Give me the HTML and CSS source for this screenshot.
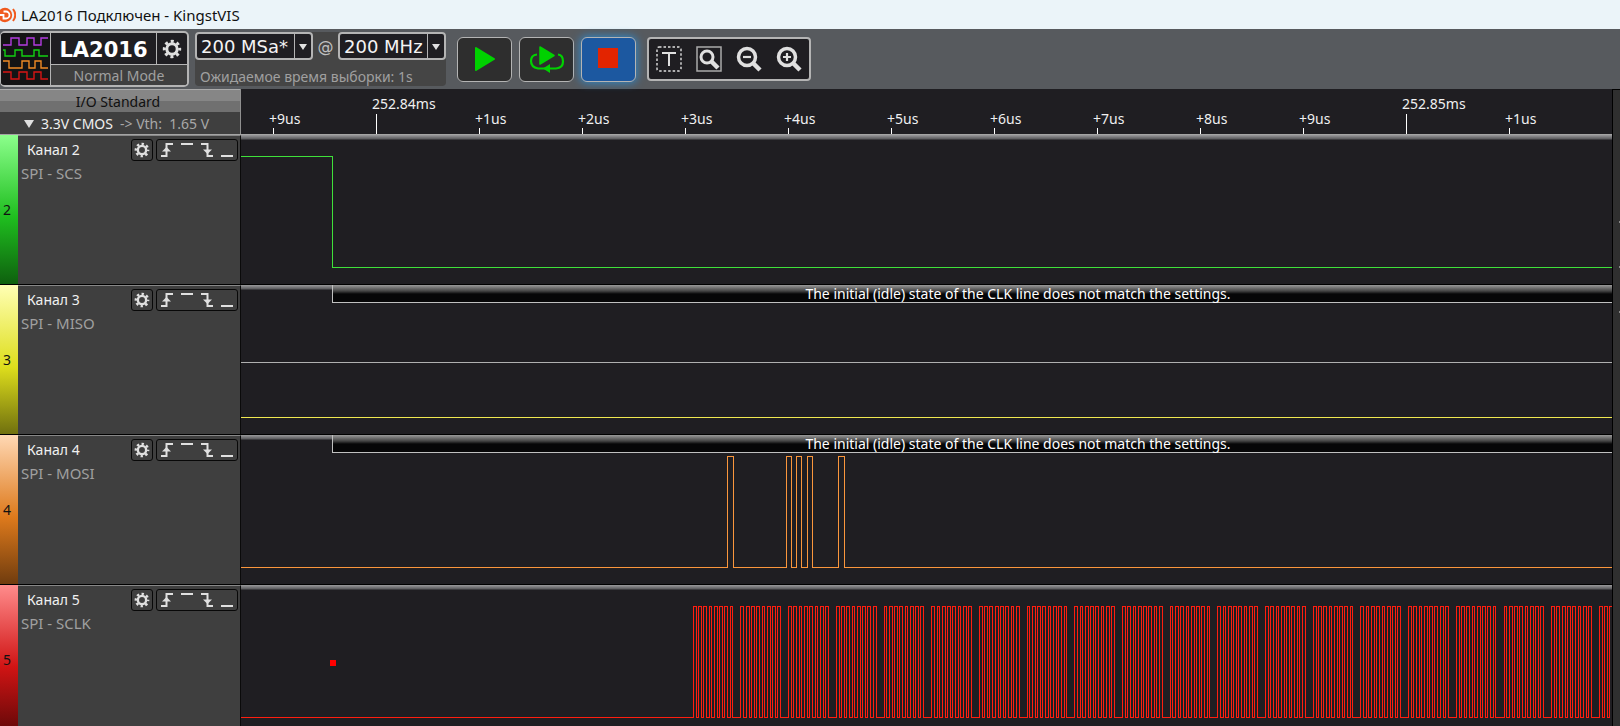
FILE: index.html
```html
<!DOCTYPE html>
<html lang="ru">
<head>
    <meta charset="UTF-8">
    <meta name="viewport" content="width=device-width, initial-scale=1.0">
    <title>LA2016 Подключен - KingstVIS</title>
    <link rel="stylesheet" href="styles.css">
</head>
<body>
    <svg class="sprite">
        <symbol id="gear" viewBox="0 0 20 20">
            <circle cx="10" cy="10" r="5.2" fill="none" stroke="currentColor" stroke-width="3"/>
            <circle cx="10" cy="10" r="7.7" fill="none" stroke="currentColor" stroke-width="3" stroke-dasharray="3 3.048" stroke-dashoffset="1.5"/>
        </symbol>
        <symbol id="rise" viewBox="0 0 14 16">
            <path d="M1 14H6.500V2H13" fill="none" stroke="currentColor" stroke-width="2"/>
            <path d="M2 9.500L6.500 5L11 9.500Z" fill="currentColor"/>
        </symbol>
        <symbol id="high" viewBox="0 0 14 16">
            <path d="M1 2H13" stroke="currentColor" stroke-width="2"/>
        </symbol>
        <symbol id="fall" viewBox="0 0 14 16">
            <path d="M1 2H7.500V14H13" fill="none" stroke="currentColor" stroke-width="2"/>
            <path d="M3 7.500L7.500 12L12 7.500Z" fill="currentColor"/>
        </symbol>
        <symbol id="low" viewBox="0 0 14 16">
            <path d="M1 14H13" stroke="currentColor" stroke-width="2"/>
        </symbol>
    </svg>

    <header class="titlebar">
        <svg class="app-icon" width="16" height="16" viewBox="0 0 16 16">
            <circle cx="5" cy="8" r="7.200" fill="#f05a1e"/>
            <path d="M13 2Q17.500 8 13 14" fill="none" stroke="#f05a1e" stroke-width="2"/>
            <path d="M3.500 4.500H6A3.500 3.500 0 0 1 6 11.500H3.500V7M0 8H3.500" fill="none" stroke="#fff" stroke-width="1.800"/>
        </svg>
        <span>LA2016 Подключен - KingstVIS</span>
    </header>

    <div class="toolbar">
        <div class="device">
            <svg class="device-logo" width="49" height="52" viewBox="0 0 49 52">
                <g fill="none" stroke-width="1.400">
                    <path d="M2 12H10V5H18V12H26V5H33V12H40V5H47" stroke="#b33ce0"/>
                    <path d="M2 17H4V23H14V17H21V23H33V17H38V23H47" stroke="#12d112"/>
                    <path d="M2 28H8V35H21V28H28V35H34V28H40V35H47" stroke="#f08a24"/>
                    <path d="M2 39H10V46H18V39H26V46H33V39H40V46H47" stroke="#d81414"/>
                </g>
            </svg>
            <div class="device-info">
                <div class="device-top">
                    <strong>LA2016</strong>
                    <button class="device-gear" aria-label="Settings"><svg width="20" height="20"><use href="#gear"/></svg></button>
                </div>
                <div class="device-mode">Normal Mode</div>
            </div>
        </div>

        <div class="sampling">
            <div class="sampling-row">
                <span class="combo combo-depth"><select aria-label="Sample depth"><option>200 MSa*</option></select></span>
                <span class="at">@</span>
                <span class="combo combo-rate"><select aria-label="Sample rate"><option>200 MHz</option></select></span>
            </div>
            <div class="sampling-time">Ожидаемое время выборки: 1s</div>
        </div>

        <div class="run">
            <button aria-label="Start">
                <svg width="36" height="32" viewBox="0 0 36 32"><path d="M9 5L27 16L9 27Z" fill="#00d200" stroke="#00d200" stroke-width="2" stroke-linejoin="round"/></svg>
            </button>
            <button aria-label="Repeat">
                <svg width="36" height="32" viewBox="0 0 36 32">
                    <path d="M8 11.500Q2 12 2 18T9 25.500H27Q34 25 34 18.500T29 11.500" fill="none" stroke="#00d200" stroke-width="2.200"/>
                    <path d="M11 4L25 12.500L11 21Z" fill="#00d200" stroke="#00d200" stroke-width="1.500" stroke-linejoin="round"/>
                    <path d="M14 25.500L21 21V30Z" fill="#00d200"/>
                </svg>
            </button>
            <button class="active" aria-label="Stop">
                <svg width="36" height="32" viewBox="0 0 36 32"><rect x="7" y="5" width="20" height="20" fill="#e32400"/></svg>
            </button>
        </div>

        <div class="tools">
            <button aria-label="Text">
                <svg width="26" height="26" viewBox="0 0 26 26" fill="none" stroke="#e0e0e0">
                    <rect x="1" y="1" width="24" height="24" rx="2" stroke-width="1.400" stroke-dasharray="2.500 2"/>
                    <path d="M6 7H20M13 7V20" stroke-width="2"/>
                </svg>
            </button>
            <button aria-label="Zoom to fit">
                <svg width="26" height="26" viewBox="0 0 26 26" fill="none" stroke="#e0e0e0">
                    <rect x="1" y="1" width="24" height="24" stroke="#aaa" stroke-width="1.500"/>
                    <circle cx="11" cy="11" r="6" stroke-width="3"/>
                    <path d="M15.500 15.500L22 22" stroke-width="4.500"/>
                </svg>
            </button>
            <button aria-label="Zoom out">
                <svg width="26" height="26" viewBox="0 0 26 26" fill="none" stroke="#e0e0e0">
                    <circle cx="11" cy="11" r="8.500" stroke-width="3.500"/>
                    <path d="M7 11H15" stroke-width="2.200"/>
                    <path d="M17 17L24 24" stroke-width="4.500"/>
                </svg>
            </button>
            <button aria-label="Zoom in">
                <svg width="26" height="26" viewBox="0 0 26 26" fill="none" stroke="#e0e0e0">
                    <circle cx="11" cy="11" r="8.500" stroke-width="3.500"/>
                    <path d="M7 11H15M11 7V15" stroke-width="2.200"/>
                    <path d="M17 17L24 24" stroke-width="4.500"/>
                </svg>
            </button>
        </div>
    </div>

    <main>
        <div class="workspace">
            <div class="top-row">
                <div class="standard">
                    <div class="standard-title">I/O Standard</div>
                    <button class="standard-value"><i class="triangle"></i><span>3.3V CMOS</span><small>-&gt; Vth:&nbsp; 1.65 V</small></button>
                </div>
                <div class="ruler" id="ruler"></div>
            </div>
            <div id="channels"></div>
        </div>
        <aside class="dock">
            <i></i><i></i><i></i>
        </aside>
    </main>

    <script>
        var HIGH = 21.5, LOW = 132.5, END = 4000;
        var CLK_ERROR = "The initial (idle) state of the CLK line does not match the settings.";

        // pulses: [rise, fall] pairs, the line is low between them
        function pulsePath(pulses) {
            var d = "M0 " + LOW;
            pulses.forEach(function (p) {
                d += "H" + (p[0] + 0.5) + "V" + HIGH + "H" + (p[1] + 0.5) + "V" + LOW;
            });
            return d + "H" + END;
        }

        // 8 clocks for every byte
        function clockPulses() {
            var pulses = [];
            for (var byte = 0; byte < 70; byte++) {
                for (var bit = 0; bit < 8; bit++) {
                    var x = 451.8 + byte * 47.69 + bit * 5.27;
                    pulses.push([Math.round(x), Math.round(x + 2.75)]);
                }
            }
            return pulses;
        }

        var channels = [
            { num: 2, name: "SPI - SCS", color: "green", path: "M0 " + HIGH + "H91.5V" + LOW + "H" + END },
            { num: 3, name: "SPI - MISO", color: "yellow", path: pulsePath([]), error: true, extra: '<path class="idle" d="M0 77.5H4000"/>' },
            { num: 4, name: "SPI - MOSI", color: "orange", path: pulsePath([[486, 492], [545, 550], [555, 560], [566, 571], [597, 603]]), error: true },
            { num: 5, name: "SPI - SCLK", color: "red", path: pulsePath(clockPulses()), extra: '<rect class="mark" x="89" y="75" width="6" height="6"/>' }
        ];

        function icon(id) {
            return '<button aria-label="' + id + '"><svg width="14" height="16"><use href="#' + id + '"/></svg></button>';
        }

        document.getElementById("channels").innerHTML = channels.map(function (c) {
            return '<section class="channel ' + c.color + '">' +
                '<div class="channel-num">' + c.num + '</div>' +
                '<div class="channel-info">' +
                    '<div class="channel-head"><span>Канал ' + c.num + '</span>' +
                        '<button class="channel-gear" aria-label="gear"><svg width="16" height="16"><use href="#gear"/></svg></button>' +
                        '<div class="triggers">' + ["rise", "high", "fall", "low"].map(icon).join("") + '</div>' +
                    '</div>' +
                    '<div class="channel-role">' + c.name + '</div>' +
                '</div>' +
                '<div class="wave">' +
                    '<svg width="100%" height="148"><path d="' + c.path + '"/>' + (c.extra || "") + '</svg>' +
                    (c.error ? '<div class="banner">' + CLK_ERROR + '</div>' : '') +
                '</div>' +
            '</section>';
        }).join("");

        var TICK = 103;
        var ruler = document.getElementById("ruler");

        // ruler starts at +9us of the previous 10us division, only whole divisions are drawn
        function drawRuler() {
            var count = Math.floor((ruler.clientWidth - 28) / TICK);
            var ticks = "";
            for (var i = 9; i < 9 + count; i++) {
                var major = i % 10 === 0;
                var label = major ? "252." + (83 + i / 10) + "ms" : "+" + (i % 10) + "us";
                ticks += '<div class="tick' + (major ? " major" : "") + '">' + label + '</div>';
            }
            ruler.innerHTML = ticks;
        }

        drawRuler();
        window.addEventListener("resize", drawRuler);
    </script>
</body>
</html>
```

FILE: styles.css
```css
* {
    box-sizing: border-box;
}

body {
    margin: 0;
    height: 100vh;
    overflow: hidden;
    display: flex;
    flex-direction: column;
    font-family: "Noto Sans", sans-serif;
    font-size: 14px;
    line-height: 20px;
    color: #f0f0f0;
    background-color: #1f1e22;
}

button {
    display: flex;
    align-items: center;
    justify-content: center;
    margin: 0;
    padding: 0;
    border: none;
    background: none;
    color: inherit;
    font: inherit;
    cursor: pointer;
}

svg {
    display: block;
    flex: none;
}

.sprite {
    position: absolute;
    width: 0;
    height: 0;
}

/* title bar */

.titlebar {
    display: flex;
    align-items: center;
    gap: 5px;
    flex: none;
    height: 29px;
    font-size: 15px;
    color: #111;
    background-color: #ebf4f9;
}

/* toolbar */

.toolbar {
    display: flex;
    align-items: center;
    flex: none;
    height: 60px;
    background-color: #575a5e;
}

.device {
    display: flex;
    width: 189px;
    height: 56px;
    border: 2px solid #b4b4b4;
    border-left-width: 1px;
    border-radius: 5px;
    background-color: #1f1e22;
    overflow: hidden;
}

.device-logo {
    background-color: #141415;
}

.device-info {
    flex: 1;
    border-left: 1px solid #b4b4b4;
}

.device-top {
    display: flex;
    height: 32px;
    border-bottom: 1px solid #b4b4b4;
}

.device-top strong {
    flex: 1;
    font-family: "DejaVu Sans", sans-serif;
    font-size: 21px;
    line-height: 34px;
    text-align: center;
    color: #fff;
}

.device-gear {
    width: 31px;
    border-left: 1px solid #b4b4b4;
    color: #e0e0e0;
}

.device-mode {
    line-height: 22px;
    text-align: center;
    color: #a0a0a0;
    background-color: #3f3f3f;
}

.sampling {
    width: 251px;
    height: 54px;
    margin-left: 6px;
    border-radius: 4px;
    background-color: #454545;
}

.sampling-row {
    display: flex;
    justify-content: space-between;
    font-family: "DejaVu Sans", sans-serif;
    font-size: 18px;
}

.combo {
    position: relative;
    height: 28px;
    border: 2px solid #b4b4b4;
    border-radius: 4px;
    background-color: #1f1e22;
}

.combo-depth {
    width: 118px;
}

.combo-rate {
    width: 108px;
}

.combo select {
    appearance: none;
    width: 100%;
    height: 24px;
    padding: 2px 0 0 4px;
    border: none;
    background: none;
    color: #f4f4f4;
    font: inherit;
}

.combo::before {
    content: "";
    position: absolute;
    top: 0;
    right: 16px;
    height: 24px;
    border-left: 1px solid #b4b4b4;
}

.combo::after {
    content: "";
    position: absolute;
    top: 10px;
    right: 4px;
    border: 4px solid transparent;
    border-top: 6px solid #e0e0e0;
    border-bottom: none;
}

.at {
    font-size: 16px;
    line-height: 30px;
    color: #c0c0c0;
}

.sampling-time {
    padding: 5px 0 0 5px;
    white-space: nowrap;
    color: #a0a0a0;
}

.run {
    display: flex;
    gap: 7px;
    margin-left: 11px;
}

.run button {
    width: 55px;
    height: 45px;
    border: 1px solid #b4b4b4;
    border-radius: 6px;
    background-color: #2e2e2e;
}

.run .active {
    background-color: #1c58a0;
    box-shadow: 0 0 8px 1px #2f86c8;
}

.tools {
    display: flex;
    align-items: center;
    gap: 14px;
    height: 44px;
    margin-left: 11px;
    padding: 0 7px;
    border: 2px solid #b4b4b4;
    border-radius: 4px;
    background-color: #1f1e22;
}

/* workspace */

main {
    display: flex;
    flex: 1;
    min-height: 0;
}

.workspace {
    flex: 1;
    min-width: 0;
    overflow: hidden;
}

.top-row {
    display: flex;
    height: 46px;
    border-bottom: 1px solid #a4a4a4;
}

.standard {
    flex: none;
    width: 241px;
    border-right: 1px solid #909090;
}

.standard-title {
    height: 23px;
    padding-right: 4px;
    border-top: 1px solid #aaa;
    line-height: 24px;
    text-align: center;
    color: #111;
    background: linear-gradient(#868686 50%, #707070 50%);
}

.standard-value {
    width: 100%;
    height: 22px;
    padding: 2px 0 0 24px;
    justify-content: flex-start;
    gap: 7px;
    background-color: #3f3f3f;
}

.standard-value small {
    font-size: 14px;
    color: #a8a8a8;
}

.triangle {
    border: 5px solid transparent;
    border-top: 8px solid #e0e0e0;
    border-bottom: none;
}

.ruler {
    display: flex;
    flex: 1;
    align-items: flex-end;
    padding-left: 28px;
    overflow: hidden;
}

.tick {
    flex: none;
    width: 103px;
    line-height: 18px;
}

.tick::after {
    content: "";
    display: block;
    width: 1px;
    height: 6px;
    margin-left: 4px;
    background-color: #fff;
}

.tick.major::after {
    height: 20px;
    margin-top: 1px;
}

.channel {
    display: flex;
    height: 150px;
    border-bottom: 1px solid #000;
}

.channel-num {
    flex: none;
    width: 18px;
    padding-left: 3px;
    line-height: 150px;
    color: #111;
}

.channel-info {
    flex: none;
    width: 223px;
    padding: 3px 2px 0 3px;
    border-top: 1px solid #888;
    border-right: 1px solid #0a0a0a;
    background-color: #3f3f3f;
}

.channel-head {
    display: flex;
    gap: 3px;
    padding-left: 6px;
}

.channel-head span {
    flex: 1;
    line-height: 22px;
}

.channel-gear,
.triggers {
    height: 22px;
    border: 1px solid #080808;
    border-radius: 3px;
    color: #e0e0e0;
}

.channel-gear {
    width: 22px;
}

.triggers {
    display: flex;
    align-items: center;
    justify-content: space-around;
    width: 82px;
}

.channel-role {
    padding-top: 2px;
    font-size: 15px;
    color: #a0a0a0;
}

.wave {
    display: grid;
    flex: 1;
    min-width: 0;
    background: linear-gradient(#9a9a9c, #5a5a5d 4px, #1f1e22 5px);
}

.wave svg,
.banner {
    grid-area: 1 / 1;
}

.wave path {
    fill: none;
    stroke: currentColor;
    stroke-width: 1;
    shape-rendering: crispEdges;
}

.wave .idle {
    stroke: #b0b0b0;
}

.mark {
    fill: #f00;
}

.banner {
    height: 18px;
    margin-left: 91px;
    padding-left: 91px;
    border-left: 1px solid #c0c0c0;
    border-bottom: 1px solid #c0c0c0;
    line-height: 17px;
    text-align: center;
    white-space: nowrap;
    color: #fff;
    background: linear-gradient(#999, #444 6px, #060607 9px);
}

.green .channel-num {
    background: linear-gradient(#8cff8c, #1fbe1f 55%, #0e600e);
}

.green .wave {
    color: #3fe03a;
}

.yellow .channel-num {
    background: linear-gradient(#ffffb4, #dede1c 55%, #70700e);
}

.yellow .wave {
    color: #f0e850;
}

.orange .channel-num {
    background: linear-gradient(#ffd8b4, #de7a1c 55%, #703c0e);
}

.orange .wave {
    color: #fa963c;
}

.red .channel-num {
    background: linear-gradient(#ff8c8c, #d01414 55%, #600808);
}

.red .wave {
    color: #ff1e0f;
}

.dock {
    display: flex;
    flex-direction: column;
    align-items: flex-end;
    gap: 43px;
    width: 8px;
    padding-top: 131px;
    border-top: 1px solid #000;
    border-left: 1px solid #000;
    background-color: #2f2f2f;
}

.dock i {
    width: 1px;
    height: 2px;
    background-color: #888;
}
```
